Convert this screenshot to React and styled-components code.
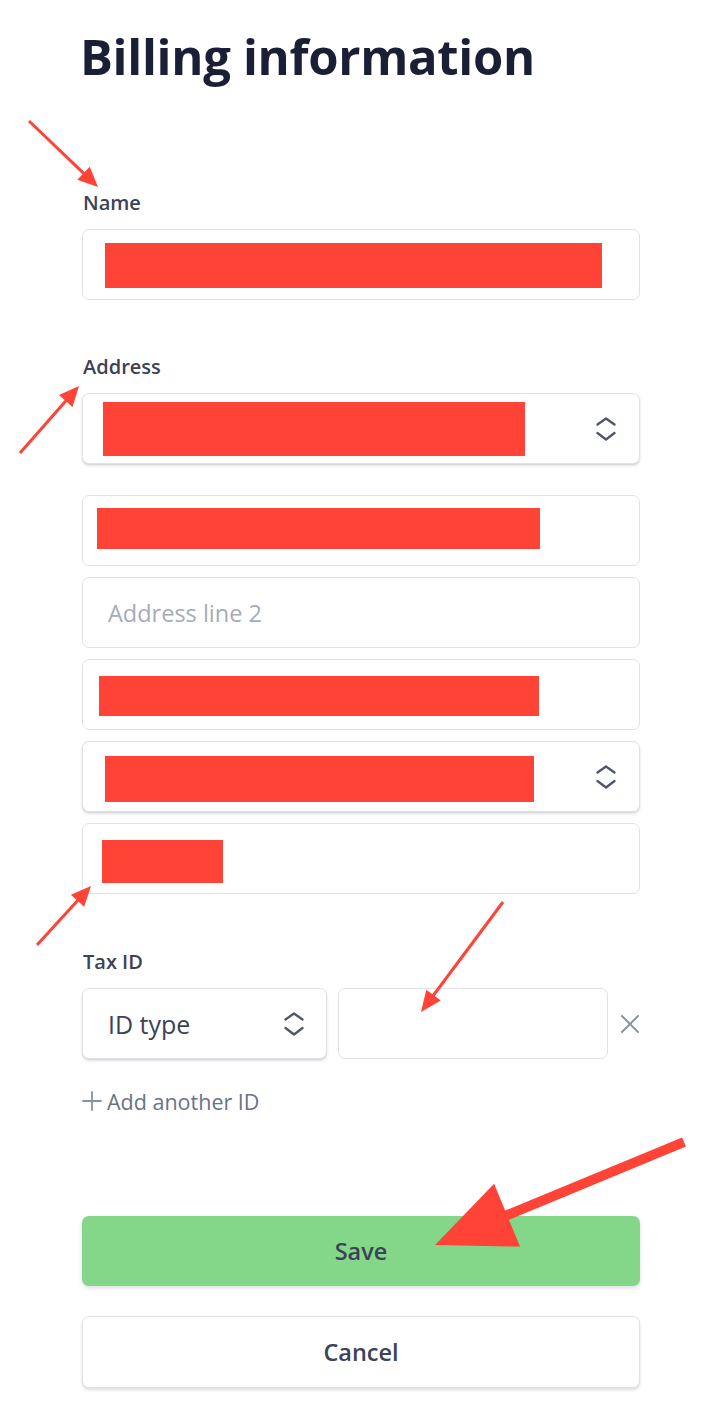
import React from 'react'
import styled, { createGlobalStyle } from 'styled-components'

const GlobalStyle = createGlobalStyle`
    body{
        margin:0;
        background:#ffffff;
        font-family:"Open Sans", "Noto Sans", sans-serif;
        color:#3c4257;
    }
`

const Page = styled.div`
    position:relative;
    width:724px;
    min-height:1412px;
    padding:16px 0 0 82px;
    box-sizing:border-box;
`

const Form = styled.div`
    width:558px;
    display:flex;
    flex-direction:column;
`

const Title = styled.h1`
    margin:0 0 0 -2px;
    font-size:49px;
    line-height:80px;
    font-weight:700;
    color:#1a1f36;
    letter-spacing:-0.3px;
`

const Label = styled.div`
    margin:${p => p.top}px 0 13px 1px;
    height:26px;
    line-height:26px;
    font-size:20px;
    font-weight:600;
    color:#3c4257;
`

const Fields = styled.div`
    display:flex;
    flex-direction:column;
    gap:11px;
`

const Box = styled.div`
    position:relative;
    height:71px;
    flex:none;
    box-sizing:border-box;
    display:flex;
    align-items:center;
    border:1px solid #e0e2e8;
    border-radius:7px;
    background:#fff;
    width:${p => p.w ? p.w + 'px' : 'auto'};
    margin-bottom:${p => p.after || 0}px;
    box-shadow:${p => p.select ? '0 2px 3px rgba(60,66,87,0.16), 0 1px 1px rgba(0,0,0,0.06)' : 'none'};
`

const Redacted = styled.div`
    background:#ff4337;
    width:${p => p.w}px;
    height:${p => p.h}px;
    margin-left:${p => p.left}px;
    margin-top:${p => p.shift || 0}px;
`

const Placeholder = styled.span`
    margin-left:25px;
    font-size:23.5px;
    color:#a3acb9;
`

const SelectText = styled.span`
    margin-left:25px;
    font-size:25px;
    font-weight:500;
    color:#3c4257;
`

const Chevron = styled.svg`
    position:absolute;
    right:${p => p.right}px;
    top:50%;
    transform:translateY(-50%);
`

const TaxRow = styled.div`
    display:flex;
    align-items:center;
    gap:11px;
`

const ClearBtn = styled.div`
    width:21px;
    flex:none;
    display:flex;
    justify-content:center;
    color:#8792a2;
`

const AddLink = styled.div`
    margin-top:27px;
    display:flex;
    align-items:center;
    gap:5px;
    font-size:21.5px;
    font-weight:500;
    color:#697386;
    height:30px;
`

const Buttons = styled.div`
    margin-top:100px;
    display:flex;
    flex-direction:column;
    gap:30px;
`

const Button = styled.button`
    height:${p => p.h}px;
    border-radius:7px;
    font-family:inherit;
    font-size:23.5px;
    font-weight:600;
    color:#3c4257;
    cursor:pointer;
    background:${p => p.primary ? '#84d788' : '#ffffff'};
    border:${p => p.primary ? 'none' : '1px solid #e0e2e8'};
    box-shadow:${p => p.primary ? '0 2px 4px rgba(60,66,87,0.18)' : '0 2px 3px rgba(60,66,87,0.18)'};
`

const Overlay = styled.svg`
    position:absolute;
    left:0;
    top:0;
    pointer-events:none;
`

function UpDown({ right }) {
    return (
        <Chevron right={right} width="20" height="26" viewBox="0 0 20 26" fill="none" stroke="#4f566b" strokeWidth="2.3" strokeLinecap="round" strokeLinejoin="round">
            <path d="M1.5 8.5 L10 2.5 L18.5 8.5" />
            <path d="M1.5 17 L10 23.5 L18.5 17" />
        </Chevron>
    )
}

// annotation arrows: [tail, tip, head length, head half width, stroke]
const arrows = [
    [[29, 121], [98, 187], 20, 9, 3],
    [[20, 453], [79, 386], 20, 9, 3],
    [[37, 945], [91, 886], 20, 9, 3],
    [[503, 902], [421, 1012], 21, 9, 3],
    [[684, 1142], [435, 1245], 78, 34, 10],
]

function Arrow({ tail, tip, len, half, sw }) {
    const dx = tip[0] - tail[0], dy = tip[1] - tail[1]
    const l = Math.hypot(dx, dy)
    const ux = dx / l, uy = dy / l
    const bx = tip[0] - ux * len, by = tip[1] - uy * len
    const nx = -uy * half, ny = ux * half
    return (
        <g>
            <line x1={tail[0]} y1={tail[1]} x2={bx + ux * 2} y2={by + uy * 2} stroke="#ff4337" strokeWidth={sw} />
            <polygon points={`${tip[0]},${tip[1]} ${bx + nx},${by + ny} ${bx - nx},${by - ny}`} fill="#ff4337" />
        </g>
    )
}

export default function App() {
    return (
        <Page>
            <GlobalStyle />
            <Form>
                <Title>Billing information</Title>

                <Label top={94}>Name</Label>
                <Box>
                    <Redacted w={497} h={45} left={22} shift={2} />
                </Box>

                <Label top={54}>Address</Label>
                <Fields>
                    <Box select after={20}>
                        <Redacted w={422} h={54} left={20} />
                        <UpDown right={23} />
                    </Box>
                    <Box>
                        <Redacted w={443} h={41} left={14} shift={-4} />
                    </Box>
                    <Box>
                        <Placeholder>Address line 2</Placeholder>
                    </Box>
                    <Box>
                        <Redacted w={440} h={40} left={16} shift={3} />
                    </Box>
                    <Box select>
                        <Redacted w={429} h={46} left={22} shift={4} />
                        <UpDown right={23} />
                    </Box>
                    <Box>
                        <Redacted w={121} h={43} left={19} shift={5} />
                    </Box>
                </Fields>

                <Label top={55}>Tax ID</Label>
                <TaxRow>
                    <Box select w={245}>
                        <SelectText>ID type</SelectText>
                        <UpDown right={22} />
                    </Box>
                    <Box w={270} />
                    <ClearBtn>
                        <svg width="18" height="18" viewBox="0 0 18 18" stroke="currentColor" strokeWidth="1.9" strokeLinecap="round">
                            <path d="M1 1 L17 17 M17 1 L1 17" />
                        </svg>
                    </ClearBtn>
                </TaxRow>

                <AddLink>
                    <svg width="20" height="20" viewBox="0 0 20 20" stroke="#8792a2" strokeWidth="1.8" strokeLinecap="round">
                        <path d="M10 1 V19 M1 10 H19" />
                    </svg>
                    Add another ID
                </AddLink>

                <Buttons>
                    <Button primary h={70}>Save</Button>
                    <Button h={72}>Cancel</Button>
                </Buttons>
            </Form>

            <Overlay width="724" height="1412" viewBox="0 0 724 1412">
                {arrows.map(([tail, tip, len, half, sw], i) => (
                    <Arrow key={i} tail={tail} tip={tip} len={len} half={half} sw={sw} />
                ))}
            </Overlay>
        </Page>
    )
}
